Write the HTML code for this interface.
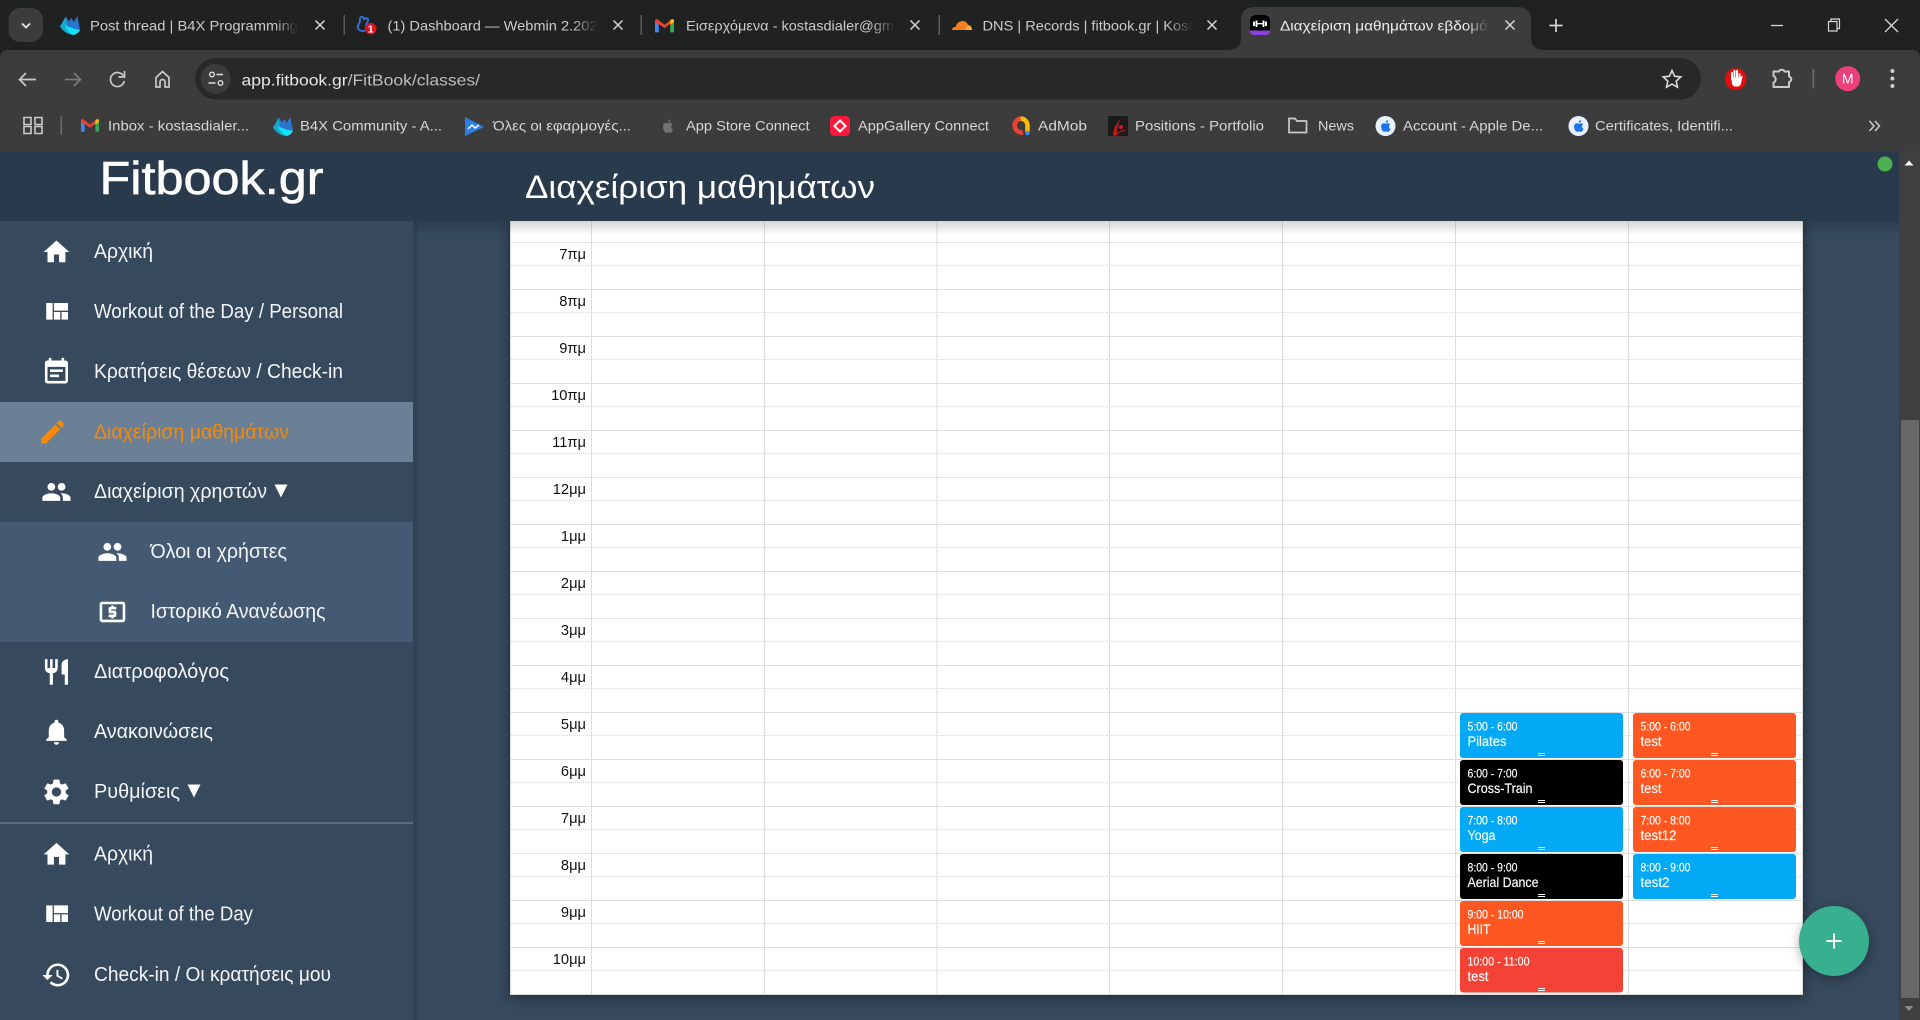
<!DOCTYPE html>
<html lang="el"><head><meta charset="utf-8"><title>Διαχείριση μαθημάτων εβδομάδας</title>
<style>
html,body{margin:0;padding:0;width:1920px;height:1020px;overflow:hidden;background:#36495d}
svg{display:block;position:absolute;left:0;top:0}
text{font-family:"Liberation Sans","DejaVu Sans",sans-serif;white-space:pre}
.tab{font-size:14px;fill:#c9cbcc}
.bm{font-size:14px;fill:#d6d7d7}
.nav{font-size:20px;fill:#f4f5f6}
.hr{font-size:14.7px;fill:#111;text-anchor:end}
.tm{font-size:12px;fill:#fff;stroke:#fff;stroke-width:.15}
.ti{font-size:14px;fill:#fff;stroke:#fff;stroke-width:.15}
.ic{fill:#fff}
.cs{stroke:#d5d6d6;stroke-width:1.5;fill:none}
.tb{stroke:#c9caca;stroke-width:1.7;fill:none}
</style></head>
<body>
<svg width="1920" height="1020" viewBox="0 0 1920 1020" xmlns="http://www.w3.org/2000/svg">
<defs>
<linearGradient id="sh" x1="0" y1="0" x2="0" y2="1"><stop offset="0" stop-color="#000" stop-opacity=".16"/><stop offset="1" stop-color="#000" stop-opacity="0"/></linearGradient>
<linearGradient id="sx" x1="0" y1="0" x2="1" y2="0"><stop offset="0" stop-color="#000" stop-opacity=".1"/><stop offset=".7" stop-color="#000" stop-opacity=".07"/><stop offset="1" stop-color="#000" stop-opacity="0"/></linearGradient>
<linearGradient id="fd" x1="0" y1="0" x2="1" y2="0"><stop offset="0" stop-color="#202222" stop-opacity="0"/><stop offset="1" stop-color="#202222"/></linearGradient>
<linearGradient id="fa" x1="0" y1="0" x2="1" y2="0"><stop offset="0" stop-color="#3c3c3c" stop-opacity="0"/><stop offset="1" stop-color="#3c3c3c"/></linearGradient>
<symbol id="flame" viewBox="30 18 60 57">
<path fill="#2b74cf" d="M47 18L56 34L65 24L71 36L82 18L90 60L72 75L50 60Z"/>
<path fill="#19a7cc" d="M30 50L47 20L52 52L72 75C56 75 40 66 30 50Z"/>
<path fill="#0fe4fb" d="M44 46L72 56L90 60C86 68 80 72 72 75C60 72 50 60 44 46Z"/>
</symbol>
<symbol id="gm" viewBox="0 0 20 14"><path fill="#4285f4" d="M0 2V14H4V6Z"/><path fill="#34a853" d="M16 6V14H20V2Z"/><path fill="#ea4335" d="M0 1.500C0 0 2 -.5 3 .5L10 6L17 .5C18 -.5 20 0 20 1.500V3L16 6V5L10 9.500L4 5V6L0 3Z"/><path fill="#fbbc04" d="M17 .5C18 -.5 20 0 20 1.500V3L16 6V1.300Z"/></symbol>
<symbol id="apl" viewBox="0 0 20 20"><circle cx="10" cy="10" r="10" fill="#e8f1fd"/><path fill="#1a73e8" d="M13.500 10.400c0-1.400 1.100-2 1.200-2.100-.7-1-1.700-1.100-2.100-1.100-.9-.1-1.700.5-2.200.5s-1.200-.5-1.900-.5c-1 0-1.900.6-2.400 1.400-1 1.800-.3 4.400.7 5.800.5.7 1.100 1.500 1.800 1.500s1-.5 1.900-.5 1.100.5 1.900.5 1.300-.7 1.800-1.400c.6-.8.8-1.600.8-1.600s-1.500-.6-1.500-2.500zM12 6c.4-.5.7-1.200.6-1.900-.6 0-1.300.4-1.700.9-.4.4-.7 1.100-.6 1.800.6 0 1.300-.3 1.700-.8z"/></symbol>
<path id="i-home" d="M10 20v-6h4v6h5v-8h3L12 3 2 12h3v8z"/>
<path id="i-quilt" d="M10 18h5v-6h-5v6zm-6 0h5V5H4v13zm12 0h5v-6h-5v6zM10 5v6h11V5H10z"/>
<path id="i-people" d="M16 11c1.660 0 2.990-1.340 2.990-3S17.660 5 16 5c-1.660 0-3 1.340-3 3s1.340 3 3 3zm-8 0c1.660 0 2.990-1.340 2.990-3S9.660 5 8 5C6.340 5 5 6.340 5 8s1.340 3 3 3zm0 2c-2.330 0-7 1.170-7 3.500V19h14v-2.500c0-2.330-4.670-3.500-7-3.500zm8 0c-.29 0-.62.02-.97.05 1.160.84 1.970 1.970 1.970 3.450V19h6v-2.500c0-2.330-4.670-3.500-7-3.500z"/>
</defs>

<!-- tab strip -->
<rect width="1920" height="151" fill="#202222"/>
<path d="M0 58Q0 50 8 50H1912Q1920 50 1920 58V151H0Z" fill="#3c3c3c"/>
<path d="M1227 50C1236 50 1241 46 1241 38V19C1241 11 1247 7 1254 7H1518C1525 7 1531 11 1531 19V38C1531 46 1536 50 1545 50Z" fill="#3c3c3c"/>
<rect x="8.500" y="8" width="34.500" height="34" rx="12" fill="#3c3c3c"/>
<path d="M22 23.500L26 27.500L30 23.500" fill="none" stroke="#e8e8e8" stroke-width="1.800"/>

<use href="#flame" x="60" y="16" width="20" height="19"/>
<text class="tab" x="90" y="30.500" textLength="208" lengthAdjust="spacingAndGlyphs">Post thread | B4X Programming</text>
<rect x="274" y="14" width="24" height="24" fill="url(#fd)"/><rect x="298" y="14" width="6" height="24" fill="#202222"/>
<path class="cs" d="M315.500 20.500l9 9m0-9l-9 9"/>
<rect x="343.500" y="15" width="1.500" height="20" fill="#5a5a5a"/>

<path d="M360 19c0-3 4-3 4 0v1c1-3 5-2 4 1l-2 4c2 2 1 6-3 6-4 0-6-3-5-5 0-2 2-3 2-5z" fill="none" stroke="#2f6fd6" stroke-width="2"/><circle cx="370.700" cy="28.700" r="5.800" fill="#e0141f"/><text x="370.700" y="32.500" font-size="10.500" font-weight="700" fill="#fff" text-anchor="middle">1</text>
<text class="tab" x="387.500" y="30.500" textLength="210" lengthAdjust="spacingAndGlyphs">(1) Dashboard — Webmin 2.202</text>
<rect x="573" y="14" width="25" height="24" fill="url(#fd)"/><rect x="598" y="14" width="6" height="24" fill="#202222"/>
<path class="cs" d="M613.500 20.500l9 9m0-9l-9 9"/>
<rect x="640.500" y="15" width="1.500" height="20" fill="#5a5a5a"/>

<use href="#gm" x="655" y="19" width="19" height="13.500"/>
<text class="tab" x="686" y="30.500" textLength="208" lengthAdjust="spacingAndGlyphs">Εισερχόμενα - kostasdialer@gm</text>
<rect x="871" y="14" width="24" height="24" fill="url(#fd)"/><rect x="895" y="14" width="6" height="24" fill="#202222"/>
<path class="cs" d="M910.500 20.500l9 9m0-9l-9 9"/>
<rect x="938.500" y="15" width="1.500" height="20" fill="#5a5a5a"/>

<path d="M952 30c0-2 1.500-3 3.500-3 1-3 3-6 7-6 3 0 5 2 5.500 4 2-.5 4 1.500 4 5z" fill="#f38020"/><path d="M967 26c3-.5 5 1.500 5 4h-7z" fill="#fbad41"/>
<text class="tab" x="982.500" y="30.500" textLength="210" lengthAdjust="spacingAndGlyphs">DNS | Records | fitbook.gr | Kost</text>
<rect x="1166" y="14" width="27" height="24" fill="url(#fd)"/><rect x="1193" y="14" width="6" height="24" fill="#202222"/>
<path class="cs" d="M1207.500 20.500l9 9m0-9l-9 9"/>

<rect x="1250" y="15" width="20" height="20" rx="6" fill="#000"/><path d="M1250 30.500h20v.5c0 2.500-2 4-4 4h-12c-2 0-4-1.500-4-4z" fill="#8e3fe0"/>
<path d="M1254 21.500v4.500M1256.500 20.500v6.500M1263.500 20.500v6.500M1266 21.500v4.500" stroke="#fff" stroke-width="1.900" fill="none"/><path d="M1256.500 23.700h7" stroke="#fff" stroke-width="1.300"/>
<text class="tab" x="1280" y="30.500" textLength="208" lengthAdjust="spacingAndGlyphs" style="fill:#eee">Διαχείριση μαθημάτων εβδομά</text>
<rect x="1465" y="14" width="24" height="24" fill="url(#fa)"/><rect x="1489" y="14" width="6" height="24" fill="#3c3c3c"/>
<path class="cs" d="M1505.500 20.500l9 9m0-9l-9 9"/>
<path d="M1549.500 25.500h13m-6.500-6.500v13" stroke="#d5d6d6" stroke-width="1.700" fill="none"/>

<path d="M1771 25.500h12" stroke="#d5d6d6" stroke-width="1.300"/>
<path d="M1828.500 21.500h8.500v9.500h-8.500zM1831 21.500v-2.500h8.500v9.500h-2.500" fill="none" stroke="#d5d6d6" stroke-width="1.200"/>
<path d="M1885 19l13 13m0-13l-13 13" stroke="#d5d6d6" stroke-width="1.300"/>

<!-- toolbar -->
<path d="M36 79.500H20m6-6.500l-6.500 6.500 6.500 6.500" class="tb"/>
<path d="M65 79.500H80m-6-6.500l6.500 6.500-6.500 6.500" fill="none" stroke="#7a7a7a" stroke-width="1.700"/>
<path d="M123.500 76a7 7 0 1 0 .8 5" class="tb"/><path d="M124.500 71v6h-6" class="tb"/>
<path d="M156 77.500L162.500 71.500L169 77.500V87H165V82a2.500 2.500 0 0 0-5 0V87H156Z" class="tb"/>
<rect x="195" y="58" width="1506" height="41.500" rx="20.700" fill="#282828"/>
<circle cx="215.700" cy="79" r="15" fill="#3c3c3c"/>
<circle cx="212" cy="74.500" r="2.300" fill="none" stroke="#ddd" stroke-width="1.400"/><path d="M216.500 74.500h6.500M208.500 83h7" stroke="#ddd" stroke-width="1.400"/><circle cx="220.500" cy="83" r="2.300" fill="none" stroke="#ddd" stroke-width="1.400"/>
<text x="241.500" y="85.500" font-size="16" fill="#e6e6e6" textLength="238.500" lengthAdjust="spacingAndGlyphs">app.fitbook.gr<tspan fill="#bdbdbd">/FitBook/classes/</tspan></text>
<path d="M1672 70.500l2.600 5.700 6.200.7-4.600 4.200 1.300 6.100-5.500-3.100-5.500 3.100 1.300-6.100-4.600-4.200 6.200-.7z" fill="none" stroke="#d8d8d8" stroke-width="1.600"/>
<path d="M1731.200 68.500h9l6 6v9l-6 6h-9l-6-6v-9z" fill="#e60c0c"/>
<path d="M1732 79v-6M1734.500 78v-7M1737 78v-7M1739.500 79v-5" stroke="#fff" stroke-width="2" fill="none" stroke-linecap="round"/><path d="M1731 77.500h9.500l.2-1 1.500-1 .3 1.500-1.500 6.500c-.5 2-2 3-3.800 3h-2c-2 0-3-1.500-3.200-3.500z" fill="#fff"/>
<path d="M1773.500 71.500H1779a3 3 0 0 1 5.500 0H1789V76.500a2.800 2.800 0 0 1 0 5.500V87H1773.500V82.500a3.500 3.500 0 0 0 0-6.500z" fill="none" stroke="#c9caca" stroke-width="2" stroke-linejoin="round"/>
<rect x="1812.500" y="69" width="1.700" height="19.500" fill="#6b6b6b"/>
<circle cx="1847.700" cy="78.700" r="12.500" fill="#ec407a"/><text x="1847.700" y="83.700" font-size="14" fill="#fff" text-anchor="middle">M</text>
<circle cx="1892.400" cy="71" r="2" fill="#d0d0d0"/><circle cx="1892.400" cy="78.500" r="2" fill="#d0d0d0"/><circle cx="1892.400" cy="86" r="2" fill="#d0d0d0"/>

<!-- bookmarks -->
<path d="M24 117.500h7v7h-7zM35 117.500h7v7h-7zM24 126.500h7v7h-7zM35 126.500h7v7h-7z" fill="none" stroke="#c9caca" stroke-width="1.600"/>
<rect x="60.500" y="116" width="1.500" height="19" fill="#6b6b6b"/>
<use href="#gm" x="81" y="119" width="18" height="13"/>
<text class="bm" x="108" y="130.500" textLength="141" lengthAdjust="spacingAndGlyphs">Inbox - kostasdialer...</text>
<use href="#flame" x="273" y="117" width="20" height="19"/>
<text class="bm" x="300" y="130.500" textLength="142" lengthAdjust="spacingAndGlyphs">B4X Community - A...</text>
<path d="M465 117l19 10-19 9z" fill="#2d7fe8"/><path d="M468 129l4-4 3 3 4-3" fill="none" stroke="#fff" stroke-width="1.500"/>
<text class="bm" x="493" y="130.500" textLength="138" lengthAdjust="spacingAndGlyphs">Όλες οι εφαρμογές...</text>
<path d="M671 123c-1.500-.6-2.500.2-3.500.2s-1.800-.8-3 0c-2.300 1.500-1.800 6 .3 8.800.7 1 1.400 1.300 2.300.8s1.900-.5 2.800 0c1.300.5 2.300-1.200 3.100-3-2.200-1-2.300-4-.5-5.500zM668 122.500c.2-1.700 1.300-3 2.800-3.200-.1 1.700-1.200 3.100-2.800 3.200z" fill="#727272"/>
<text class="bm" x="686" y="130.500" textLength="123.500" lengthAdjust="spacingAndGlyphs">App Store Connect</text>
<rect x="830" y="116" width="20" height="20" rx="4.500" fill="#ff1a3c"/><path d="M840 120.500l5.500 5.500-5.500 5.500-5.500-5.500z" fill="none" stroke="#fff" stroke-width="2"/>
<text class="bm" x="858" y="130.500" textLength="131" lengthAdjust="spacingAndGlyphs">AppGallery Connect</text>
<path d="M1023 132.500A7 7 0 1 1 1020.500 118.500" fill="none" stroke="#ea4335" stroke-width="4.500"/><path d="M1020.500 118.500A7 7 0 0 1 1027.500 125.500V132" fill="none" stroke="#fbbc04" stroke-width="4.500"/><circle cx="1027.500" cy="133" r="2.300" fill="#4285f4"/>
<text class="bm" x="1038" y="130.500" textLength="49" lengthAdjust="spacingAndGlyphs">AdMob</text>
<rect x="1108" y="116" width="20" height="20" fill="#1b1b1b"/><path d="M1121 118C1118 123 1113 127 1113 135.500L1117 135.500C1119 132 1122 131 1125.500 131L1125.500 130C1121.500 130 1118.500 131.500 1117 134C1116.500 129 1118 125 1121 118Z" fill="#c8161d"/><circle cx="1121" cy="127" r="2" fill="#d11a20"/>
<text class="bm" x="1135" y="130.500" textLength="129" lengthAdjust="spacingAndGlyphs">Positions - Portfolio</text>
<path d="M1289 118.500h6l2 2.500h9.500v11.500h-17.500z" fill="none" stroke="#c9caca" stroke-width="1.700"/>
<text class="bm" x="1318" y="130.500" textLength="36" lengthAdjust="spacingAndGlyphs">News</text>
<use href="#apl" x="1375.500" y="116" width="20" height="20"/>
<text class="bm" x="1403" y="130.500" textLength="140" lengthAdjust="spacingAndGlyphs">Account - Apple De...</text>
<use href="#apl" x="1568.500" y="116" width="20" height="20"/>
<text class="bm" x="1595" y="130.500" textLength="138" lengthAdjust="spacingAndGlyphs">Certificates, Identifi...</text>
<path d="M1869.500 121l4.500 5-4.500 5M1875 121l4.500 5-4.500 5" fill="none" stroke="#c9caca" stroke-width="1.500"/>

<!-- page -->
<rect y="151" width="1899" height="869" fill="#36495d"/>
<rect x="413" y="221" width="7" height="799" fill="url(#sx)"/>

<!-- calendar -->
<rect x="510.500" y="221" width="1292.500" height="774" fill="#fff" style="filter:drop-shadow(0 2px 6px rgba(0,0,0,.45))"/>
<path fill="none" stroke="#d8d8d8" stroke-width="1" stroke-dasharray="1 1" d="M511 265.500H1802M511 312.500H1802M511 359.500H1802M511 406.500H1802M511 453.500H1802M511 500.500H1802M511 547.500H1802M511 594.500H1802M511 641.500H1802M511 688.500H1802M511 735.500H1802M511 782.500H1802M511 829.500H1802M511 876.500H1802M511 923.500H1802M511 970.500H1802"/>
<path fill="none" stroke="#ddd" stroke-width="1" d="M511 242.500H1802M511 289.500H1802M511 336.500H1802M511 383.500H1802M511 430.500H1802M511 477.500H1802M511 524.500H1802M511 571.500H1802M511 618.500H1802M511 665.500H1802M511 712.500H1802M511 759.500H1802M511 806.500H1802M511 853.500H1802M511 900.500H1802M511 947.500H1802M511 994.500H1802M591.500 221V995M764.500 221V995M937 221V995M1109.500 221V995M1282.500 221V995M1455.500 221V995M1628.500 221V995M510.500 221V995M1802.500 221V995"/>

<text class="hr" x="586" y="259">7πμ</text>
<text class="hr" x="586" y="306">8πμ</text>
<text class="hr" x="586" y="353">9πμ</text>
<text class="hr" x="586" y="400">10πμ</text>
<text class="hr" x="586" y="447">11πμ</text>
<text class="hr" x="586" y="494">12μμ</text>
<text class="hr" x="586" y="541">1μμ</text>
<text class="hr" x="586" y="588">2μμ</text>
<text class="hr" x="586" y="635">3μμ</text>
<text class="hr" x="586" y="682">4μμ</text>
<text class="hr" x="586" y="729">5μμ</text>
<text class="hr" x="586" y="776">6μμ</text>
<text class="hr" x="586" y="823">7μμ</text>
<text class="hr" x="586" y="870">8μμ</text>
<text class="hr" x="586" y="917">9μμ</text>
<text class="hr" x="586" y="964">10μμ</text>

<!-- events col 1 -->
<rect x="1460" y="713" width="163" height="45" rx="3" fill="#03a9f4"/>
<text class="tm" x="1467.500" y="730.500" textLength="50" lengthAdjust="spacingAndGlyphs">5:00 - 6:00</text>
<text class="ti" x="1467.500" y="746" textLength="39" lengthAdjust="spacingAndGlyphs">Pilates</text>
<rect x="1460" y="760" width="163" height="45" rx="3" fill="#000"/>
<text class="tm" x="1467.500" y="777.500" textLength="50" lengthAdjust="spacingAndGlyphs">6:00 - 7:00</text>
<text class="ti" x="1467.500" y="793" textLength="65" lengthAdjust="spacingAndGlyphs">Cross-Train</text>
<rect x="1460" y="807" width="163" height="45" rx="3" fill="#03a9f4"/>
<text class="tm" x="1467.500" y="824.500" textLength="50" lengthAdjust="spacingAndGlyphs">7:00 - 8:00</text>
<text class="ti" x="1467.500" y="840" textLength="28" lengthAdjust="spacingAndGlyphs">Yoga</text>
<rect x="1460" y="854" width="163" height="45" rx="3" fill="#000"/>
<text class="tm" x="1467.500" y="871.500" textLength="50" lengthAdjust="spacingAndGlyphs">8:00 - 9:00</text>
<text class="ti" x="1467.500" y="887" textLength="71" lengthAdjust="spacingAndGlyphs">Aerial Dance</text>
<rect x="1460" y="901" width="163" height="45" rx="3" fill="#ff5722"/>
<text class="tm" x="1467.500" y="918.500" textLength="56" lengthAdjust="spacingAndGlyphs">9:00 - 10:00</text>
<text class="ti" x="1467.500" y="934" textLength="23" lengthAdjust="spacingAndGlyphs">HIIT</text>
<rect x="1460" y="948" width="163" height="44.500" rx="3" fill="#f44336"/>
<text class="tm" x="1467.500" y="965.500" textLength="62" lengthAdjust="spacingAndGlyphs">10:00 - 11:00</text>
<text class="ti" x="1467.500" y="981" textLength="21" lengthAdjust="spacingAndGlyphs">test</text>
<!-- events col 2 -->
<rect x="1633" y="713" width="163" height="45" rx="3" fill="#ff5722"/>
<text class="tm" x="1640.500" y="730.500" textLength="50" lengthAdjust="spacingAndGlyphs">5:00 - 6:00</text>
<text class="ti" x="1640.500" y="746" textLength="21" lengthAdjust="spacingAndGlyphs">test</text>
<rect x="1633" y="760" width="163" height="45" rx="3" fill="#ff5722"/>
<text class="tm" x="1640.500" y="777.500" textLength="50" lengthAdjust="spacingAndGlyphs">6:00 - 7:00</text>
<text class="ti" x="1640.500" y="793" textLength="21" lengthAdjust="spacingAndGlyphs">test</text>
<rect x="1633" y="807" width="163" height="45" rx="3" fill="#ff5722"/>
<text class="tm" x="1640.500" y="824.500" textLength="50" lengthAdjust="spacingAndGlyphs">7:00 - 8:00</text>
<text class="ti" x="1640.500" y="840" textLength="36" lengthAdjust="spacingAndGlyphs">test12</text>
<rect x="1633" y="854" width="163" height="45" rx="3" fill="#03a9f4"/>
<text class="tm" x="1640.500" y="871.500" textLength="50" lengthAdjust="spacingAndGlyphs">8:00 - 9:00</text>
<text class="ti" x="1640.500" y="887" textLength="29" lengthAdjust="spacingAndGlyphs">test2</text>
<path stroke="#fff" stroke-width="1" d="M1538 753.500h7M1538 755.500h7M1538 800.500h7M1538 802.500h7M1538 847.500h7M1538 849.500h7M1538 894.500h7M1538 896.500h7M1538 941.500h7M1538 943.500h7M1538 988.500h7M1538 990.500h7M1711 753.500h7M1711 755.500h7M1711 800.500h7M1711 802.500h7M1711 847.500h7M1711 849.500h7M1711 894.500h7M1711 896.500h7"/>

<!-- header -->
<rect x="413" y="221" width="1486" height="14" fill="url(#sh)"/>
<rect y="151" width="1899" height="70" fill="#293a4c"/>
<text x="525" y="198" font-size="32" fill="#fff" textLength="350" lengthAdjust="spacingAndGlyphs">Διαχείριση μαθημάτων</text>
<circle cx="1885" cy="164" r="7.500" fill="#4caf50"/>

<!-- sidebar -->
<rect y="221.500" width="413" height="798.500" fill="#36495d"/>
<rect y="402" width="413" height="60" fill="#6b7f97"/>
<rect y="522" width="413" height="120" fill="#445a72"/>
<rect y="822" width="413" height="2" fill="#566c88"/>
<text x="99.500" y="194" font-size="46" fill="#fff" stroke="#fff" stroke-width=".6" textLength="224" lengthAdjust="spacingAndGlyphs">Fitbook.gr</text>

<use href="#i-home" class="ic" transform="translate(41.100 236.600) scale(1.280)"/>
<text class="nav" x="94" y="258" textLength="59" lengthAdjust="spacingAndGlyphs">Αρχική</text>
<use href="#i-quilt" class="ic" transform="translate(41.100 296.600) scale(1.280)"/>
<text class="nav" x="94" y="318" textLength="249" lengthAdjust="spacingAndGlyphs">Workout of the Day / Personal</text>
<path class="ic" transform="translate(41.100 356.600) scale(1.280)" d="M17 10H7v2h10v-2zm2-7h-1V1h-2v2H8V1H6v2H5c-1.110 0-1.990.9-1.990 2L3 19c0 1.100.89 2 2 2h14c1.100 0 2-.9 2-2V5c0-1.100-.9-2-2-2zm0 16H5V8h14v11zm-5-5H7v2h7v-2z"/>
<text class="nav" x="94" y="378" textLength="249" lengthAdjust="spacingAndGlyphs">Κρατήσεις θέσεων / Check-in</text>
<path fill="#f58a07" transform="translate(37.300 416.600) scale(1.280)" d="M3 17.250V21h3.750L17.810 9.940l-3.750-3.750L3 17.250zM20.710 7.040c.39-.39.39-1.020 0-1.410l-2.340-2.340c-.39-.39-1.020-.39-1.410 0l-1.830 1.830 3.750 3.750 1.830-1.830z"/>
<text class="nav" x="94" y="438.500" textLength="195" lengthAdjust="spacingAndGlyphs" style="fill:#f58a07">Διαχείριση μαθημάτων</text>
<use href="#i-people" class="ic" transform="translate(41.100 476.600) scale(1.280)"/>
<text class="nav" x="94" y="498" textLength="173" lengthAdjust="spacingAndGlyphs">Διαχείριση χρηστών</text>
<path class="ic" d="M274.500 484.500h13l-6.500 13z"/>
<use href="#i-people" class="ic" transform="translate(97.100 536.600) scale(1.280)"/>
<text class="nav" x="150.500" y="558" textLength="136.500" lengthAdjust="spacingAndGlyphs">Όλοι οι χρήστες</text>
<path class="ic" transform="translate(97.100 596.600) scale(1.280)" d="M11 17h2v-1h1c.55 0 1-.45 1-1v-3c0-.55-.45-1-1-1h-3v-1h4V8h-2V7h-2v1h-1c-.55 0-1 .45-1 1v3c0 .55.45 1 1 1h3v1H9v2h2v1zm9-13H4c-1.110 0-1.990.89-1.990 2L2 18c0 1.110.89 2 2 2h16c1.110 0 2-.89 2-2V6c0-1.110-.89-2-2-2zm0 14H4V6h16v12z"/>
<text class="nav" x="150.500" y="618" textLength="175" lengthAdjust="spacingAndGlyphs">Ιστορικό Ανανέωσης</text>
<path class="ic" transform="translate(41.100 656.600) scale(1.280)" d="M11 9H9V2H7v7H5V2H3v7c0 2.120 1.660 3.840 3.750 3.970V22h2.500v-9.030C11.340 12.840 13 11.120 13 9V2h-2v7zm5-3v8h2.500v8H21V2c-2.760 0-5 2.240-5 4z"/>
<text class="nav" x="94" y="678" textLength="135" lengthAdjust="spacingAndGlyphs">Διατροφολόγος</text>
<path class="ic" transform="translate(41.100 716.600) scale(1.280)" d="M12 22c1.100 0 2-.9 2-2h-4c0 1.100.89 2 2 2zm6-6v-5c0-3.070-1.640-5.640-4.500-6.320V4c0-.83-.67-1.500-1.500-1.500s-1.500.67-1.500 1.500v.68C7.630 5.360 6 7.920 6 11v5l-2 2v1h16v-1l-2-2z"/>
<text class="nav" x="94" y="738" textLength="119" lengthAdjust="spacingAndGlyphs">Ανακοινώσεις</text>
<path class="ic" transform="translate(41.100 776.600) scale(1.280)" d="M19.140 12.940c.04-.3.06-.61.06-.94 0-.32-.02-.64-.07-.94l2.030-1.580c.18-.14.23-.41.12-.61l-1.920-3.320c-.12-.22-.37-.29-.59-.22l-2.390.96c-.5-.38-1.030-.7-1.620-.94l-.36-2.540c-.04-.24-.24-.41-.48-.41h-3.840c-.24 0-.43.17-.47.41l-.36 2.540c-.59.24-1.130.57-1.620.94l-2.390-.96c-.22-.08-.47 0-.59.22L2.740 8.870c-.12.21-.08.47.12.61l2.030 1.580c-.05.3-.09.63-.09.94s.02.64.07.94l-2.030 1.580c-.18.14-.23.41-.12.61l1.920 3.320c.12.22.37.29.59.22l2.390-.96c.5.38 1.030.7 1.620.94l.36 2.540c.05.24.24.41.48.41h3.840c.24 0 .44-.17.47-.41l.36-2.540c.59-.24 1.130-.56 1.620-.94l2.390.96c.22.08.47 0 .59-.22l1.920-3.320c.12-.22.07-.47-.12-.61l-2.010-1.580zM12 15.600c-1.980 0-3.600-1.620-3.600-3.600s1.620-3.600 3.600-3.600 3.600 1.620 3.600 3.600-1.620 3.600-3.600 3.600z"/>
<text class="nav" x="94" y="798" textLength="86" lengthAdjust="spacingAndGlyphs">Ρυθμίσεις</text>
<path class="ic" d="M187.500 784.500h13l-6.500 13z"/>
<use href="#i-home" class="ic" transform="translate(41.100 839) scale(1.280)"/>
<text class="nav" x="94" y="860.500" textLength="59" lengthAdjust="spacingAndGlyphs">Αρχική</text>
<use href="#i-quilt" class="ic" transform="translate(41.100 899) scale(1.280)"/>
<text class="nav" x="94" y="920.500" textLength="159" lengthAdjust="spacingAndGlyphs">Workout of the Day</text>
<path class="ic" transform="translate(41.100 959.600) scale(1.280)" d="M13 3c-4.970 0-9 4.030-9 9H1l3.890 3.890.07.14L9 12H6c0-3.870 3.130-7 7-7s7 3.130 7 7-3.130 7-7 7c-1.930 0-3.680-.79-4.940-2.060l-1.420 1.420C8.270 19.990 10.510 21 13 21c4.970 0 9-4.030 9-9s-4.030-9-9-9zm-1 5v5l4.280 2.540.72-1.210-3.500-2.080V8H12z"/>
<text class="nav" x="94" y="981" textLength="237" lengthAdjust="spacingAndGlyphs">Check-in / Οι κρατήσεις μου</text>

<!-- FAB -->
<circle cx="1834" cy="941" r="35" fill="#38b08f" style="filter:drop-shadow(0 3px 5px rgba(0,0,0,.3))"/>
<path d="M1826.500 941h15M1834 933.500v15" stroke="#fff" stroke-width="2"/>

<!-- scrollbar -->
<rect x="1899" y="151" width="21" height="869" fill="#3f3f3f"/>
<rect x="1901" y="420" width="18" height="578" fill="#686868"/>
<path d="M1904.500 165.500h9l-4.500-5z" fill="#fff"/>
<path d="M1904.500 1006h9l-4.500 5z" fill="#8c8c8c"/>
</svg>
</body></html>
